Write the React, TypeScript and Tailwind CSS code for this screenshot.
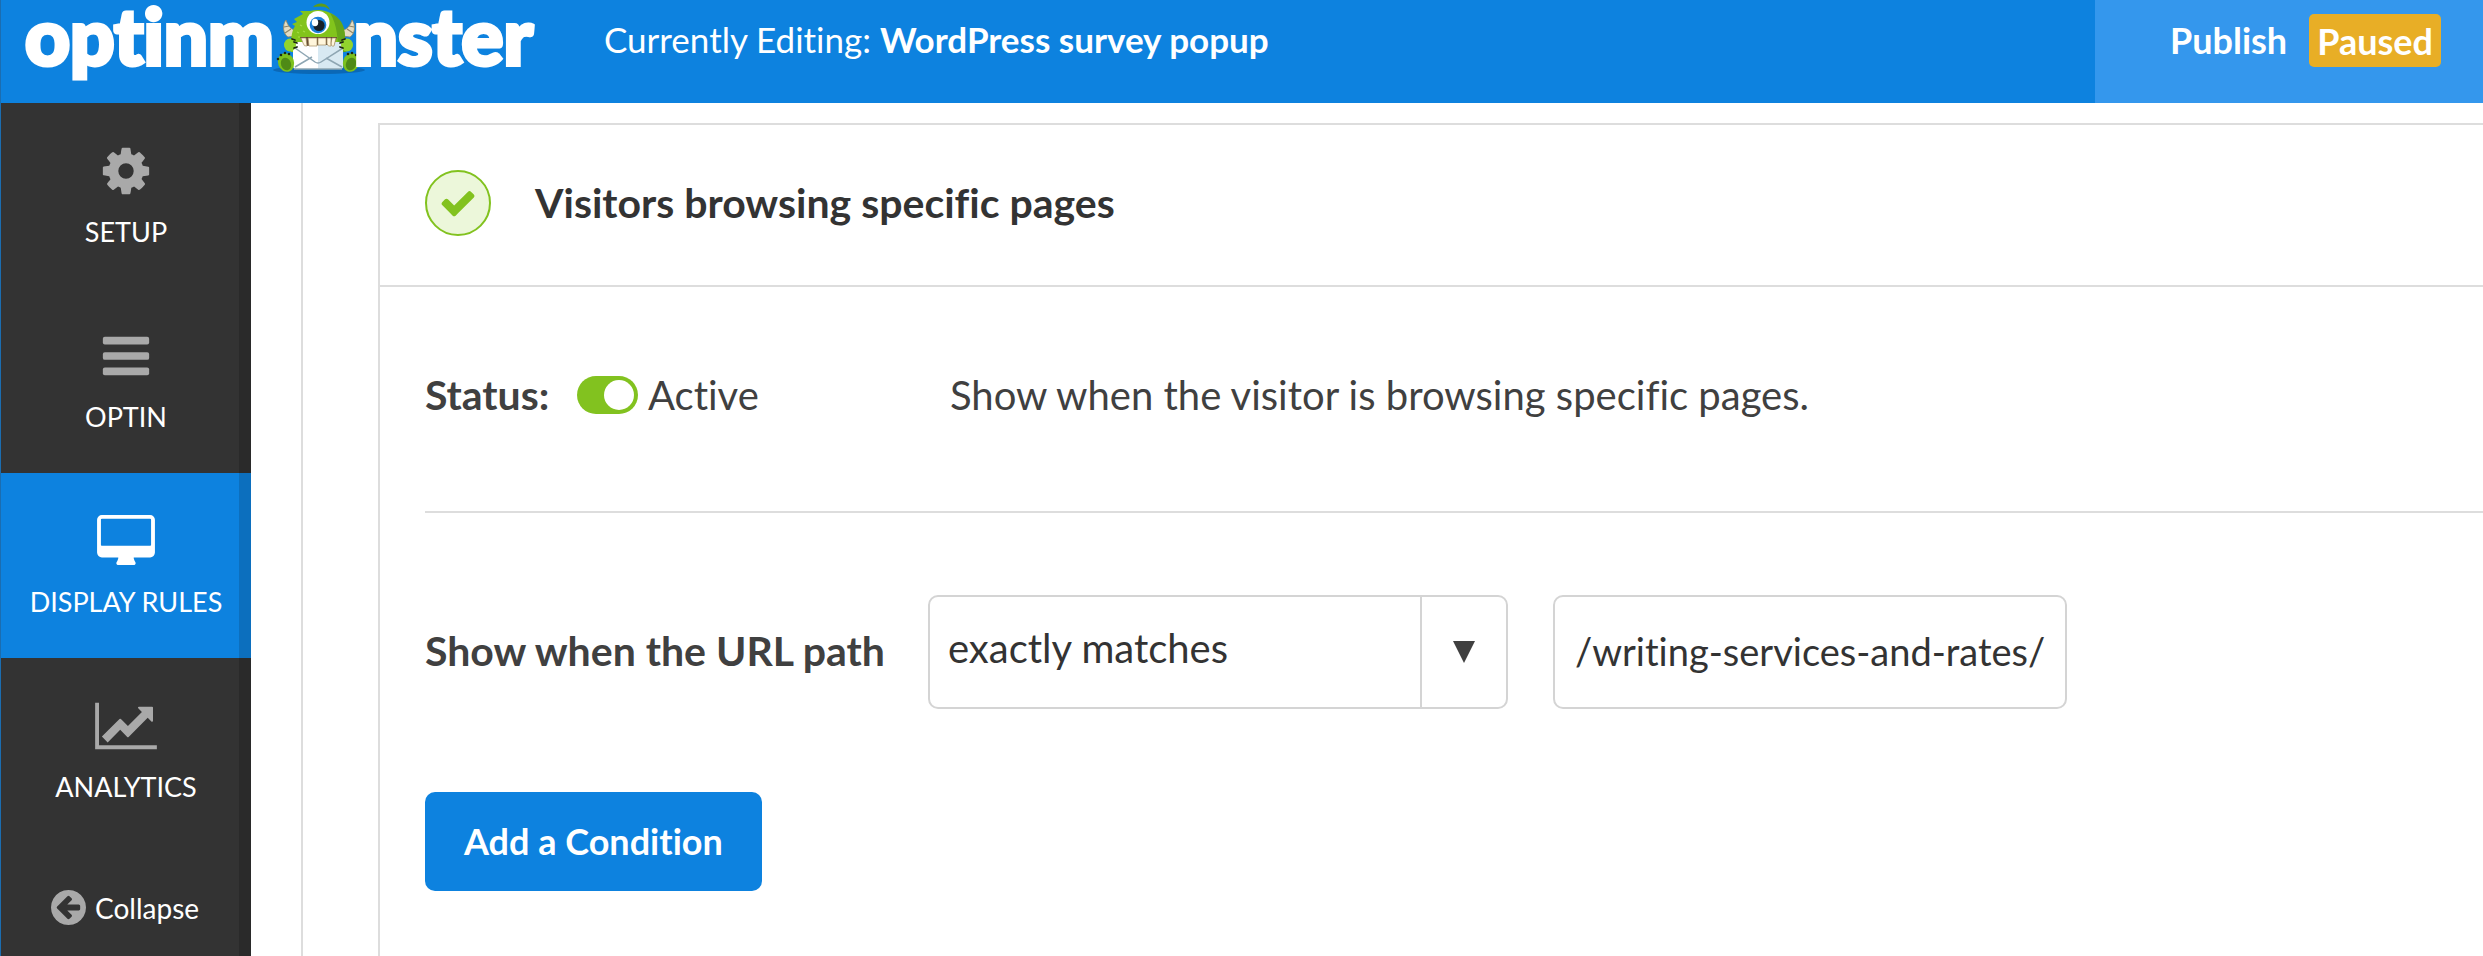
import React, { useState } from "react";

type IconProps = { className?: string };

function GearIcon({ className }: IconProps) {
  return (
    <svg className={className} viewBox="0 0 1792 1792" fill="currentColor" aria-hidden="true">
      <path d="M1152 896q0-106-75-181t-181-75-181 75-75 181 75 181 181 75 181-75 75-181zm512-109v222q0 12-8 23t-20 13l-185 28q-19 54-39 91 35 50 107 138 10 12 10 25t-9 23q-27 37-99 108t-94 71q-12 0-26-9l-138-108q-44 23-91 38-16 136-29 186-7 28-36 28h-222q-14 0-24.5-8.5t-11.5-21.5l-28-184q-49-16-90-37l-141 107q-10 9-25 9-14 0-25-11-126-114-165-168-7-10-7-23 0-12 8-23 15-21 51-66.5t54-70.5q-27-50-41-99l-183-27q-13-2-21-12.5t-8-23.5v-222q0-12 8-23t19-13l186-28q14-46 39-92-40-57-107-138-10-12-10-24 0-10 9-23 26-36 98.5-107.5t94.5-71.5q13 0 26 10l138 107q44-23 91-38 16-136 29-186 7-28 36-28h222q14 0 24.5 8.5t11.5 21.5l28 184q49 16 90 37l142-107q9-9 24-9 13 0 25 10 129 119 165 170 7 8 7 22 0 12-8 23-15 21-51 66.5t-54 70.5q26 50 41 98l183 28q13 2 21 12.5t8 23.5z" />
    </svg>
  );
}

function BarsIcon({ className }: IconProps) {
  return (
    <svg className={className} viewBox="0 0 1792 1792" fill="currentColor" aria-hidden="true">
      <rect x="128" y="256" width="1536" height="256" rx="64" />
      <rect x="128" y="768" width="1536" height="256" rx="64" />
      <rect x="128" y="1280" width="1536" height="256" rx="64" />
    </svg>
  );
}

function DesktopIcon({ className }: IconProps) {
  return (
    <svg className={className} viewBox="0 -32 1920 1792" fill="currentColor" aria-hidden="true">
      <path d="M1792 992v-832q0-13-9.5-22.5t-22.5-9.5h-1600q-13 0-22.5 9.5t-9.5 22.5v832q0 13 9.5 22.5t22.5 9.5h1600q13 0 22.5-9.5t9.5-22.5zm128-832v1088q0 66-47 113t-113 47h-544q0 37 16 77.5t32 71 16 43.5q0 26-19 45t-45 19h-512q-26 0-45-19t-19-45q0-14 16-44t32-70 16-78h-544q-66 0-113-47t-47-113v-1088q0-66 47-113t113-47h1600q66 0 113 47t47 113z" />
    </svg>
  );
}

function ChartIcon({ className }: IconProps) {
  return (
    <svg className={className} viewBox="0 0 2048 1792" fill="currentColor" aria-hidden="true">
      <path d="M2048 1536v128h-2048v-1536h128v1408h1920zm-128-1248v435q0 21-19.5 29.5t-35.5-7.5l-121-121-633 633q-10 10-23 10t-23-10l-233-233-416 416-192-192 585-585q10-10 23-10t23 10l233 233 464-464-121-121q-16-16-7.5-35.5t29.5-19.5h435q14 0 23 9t9 23z" />
    </svg>
  );
}

function ArrowCircleLeftIcon({ className }: IconProps) {
  return (
    <svg className={className} viewBox="128 128 1536 1536" fill="currentColor" aria-hidden="true">
      <path d="M1408 960v-128q0-26-19-45t-45-19h-502l189-189q19-19 19-45t-19-45l-91-91q-18-18-45-18t-45 18l-362 362-91 91q-18 18-18 45t18 45l91 91 362 362q18 18 45 18t45-18l91-91q18-18 18-45t-18-45l-189-189h502q26 0 45-19t19-45zm256-64q0 209-103 385.5t-279.5 279.5-385.5 103-385.5-103-279.5-279.5-103-385.5 103-385.5 279.5-279.5 385.5-103 385.5 103 279.5 279.5 103 385.5z" />
    </svg>
  );
}

function CheckIcon({ className }: IconProps) {
  return (
    <svg className={className} viewBox="0 0 1792 1792" fill="currentColor" aria-hidden="true">
      <path d="M1671 566q0 40-28 68l-724 724-136 136q-28 28-68 28t-68-28l-136-136-362-362q-28-28-28-68t28-68l136-136q28-28 68-28t68 28l294 295 656-657q28-28 68-28t68 28l136 136q28 28 28 68z" />
    </svg>
  );
}

function MonsterIcon({ className }: IconProps) {
  return (
    <svg className={className} viewBox="3 0 94 80" aria-hidden="true">
      <ellipse cx="50" cy="70" rx="46" ry="4" fill="#0b68b6" />
      <path d="M44 7c4-5 14-5 17 3c-4-4-9-4-17-3z" fill="#5f9c1c" />
      {/* horns */}
      <path d="M17 20c-4 5-3 14 2 17l7-1l1-6c-5 0-8-4-10-10z" fill="#e4dcc2" stroke="#8f8668" strokeWidth="0.8" />
      <path d="M83 20c4 5 3 14-2 17l-7-1l-1-6c5 0 8-4 10-10z" fill="#e4dcc2" stroke="#8f8668" strokeWidth="0.8" />
      <path d="M15 27l5-1M16 33l6-4M85 27l-5-1M84 33l-6-4" stroke="#8f8668" strokeWidth="1.2" />
      {/* head */}
      <path d="M22 52c0-12 0-20 4-26l-3-2l5-2l-3-3l9-5l-3-3l10 0c16-4 34 5 35 26l1 15z" fill="#82c41c" />
      <path d="M61 13c10 4 15 12 15 24l1 15h-9c2-10 0-28-7-39z" fill="#65a51a" />
      <path d="M28 32l2 1M31 25l2 1M34 31l2 1M29 37l2 0" stroke="#a5dc45" strokeWidth="1.2" />
      <ellipse cx="49" cy="22.5" rx="11.5" ry="11.5" fill="#fff" />
      <circle cx="49" cy="25" r="8.3" fill="#1c80da" />
      <circle cx="50" cy="25.5" r="5.6" fill="#182029" />
      <ellipse cx="46" cy="22.5" rx="3.2" ry="3.8" fill="#fff" />
      {/* envelope */}
      <path d="M24 42h50v24q0 3-3 3h-44q-3 0-3-3z" fill="#fff" />
      <path d="M49 42h25v24q0 3-3 3h-22z" fill="#d8e9f2" />
      <path d="M26 48l20 14q3 2 6 0l22-14M26 67l17-10M73 67l-16-9M25 69h48" fill="none" stroke="#8ea6b3" strokeWidth="1.5" />
      {/* teeth */}
      <path d="M31 37h37l-3 8l-14 0l-14 1z" fill="#5f4630" />
      <path d="M32 38l5 0l1 8q-3 1-4-3zM39 38h9v8h-8zM49 38h8v7h-8zM58 38h4v8q-3 1-4-2zM63 38h4l-2 8q-3 1-3-3z" fill="#fff6dc" stroke="#a38c62" strokeWidth="0.7" />
      {/* hands */}
      <ellipse cx="21" cy="45" rx="6" ry="6.5" fill="#92d42d" />
      <ellipse cx="78" cy="45" rx="6" ry="6.5" fill="#92d42d" />
      <path d="M23 39l3 1M25 42l3 1M25 48l3-1M76 39l-3 1M74 42l-3 1M74 48l-3-1" stroke="#1d2a12" strokeWidth="1.8" strokeLinecap="round" />
      {/* feet */}
      <ellipse cx="17" cy="62.5" rx="8" ry="9.5" transform="rotate(-20 17 62.5)" fill="#7cc11e" />
      <ellipse cx="82" cy="62.5" rx="8" ry="9.5" transform="rotate(20 82 62.5)" fill="#7cc11e" />
      <ellipse cx="17" cy="64" rx="5" ry="6.5" transform="rotate(-20 17 64)" fill="#4f8a16" />
      <ellipse cx="82" cy="64" rx="5" ry="6.5" transform="rotate(20 82 64)" fill="#4f8a16" />
      <path d="M9 59l0 0M12 55l0 0M16 53l0 0M20 54l0 0M90 59l0 0M87 55l0 0M83 53l0 0M79 54l0 0" stroke="#1d2a12" strokeWidth="2.6" strokeLinecap="round" />
    </svg>
  );
}

type NavItem = {
  label: string;
  icon: React.ReactNode;
  active?: boolean;
};

const navItems: NavItem[] = [
  { label: "SETUP", icon: <GearIcon className="h-[54px] w-[54px]" /> },
  { label: "OPTIN", icon: <BarsIcon className="h-[54px] w-[54px]" /> },
  { label: "DISPLAY RULES", icon: <DesktopIcon className="h-[54px] w-[58px]" />, active: true },
  { label: "ANALYTICS", icon: <ChartIcon className="h-[54px] w-[62px]" /> },
];

function Header() {
  return (
    <header className="flex h-[103px] shrink-0 items-start bg-[#0d82df] text-white">
      <a
        href="#home"
        className="flex h-[80px] w-[603px] shrink-0 items-start pl-[24px] text-[78px] leading-[70px] font-black [-webkit-text-stroke:4px_white]"
      >
        <span>optinm</span>
        <MonsterIcon className="-mr-[12px] -ml-[2px] h-[80px] w-[94px] shrink-0 [-webkit-text-stroke:0]" />
        <span>nster</span>
      </a>
      <p className="flex-1 text-[35px] leading-[79px] whitespace-nowrap">
        Currently Editing: <strong className="font-bold">WordPress survey popup</strong>
      </p>
      <div className="flex h-full w-[388px] shrink-0 items-start gap-[22px] bg-[#3497ed] pt-[14px] pl-[75px] text-[36px] leading-[52px] font-bold">
        <span>Publish</span>
        <button type="button" className="h-[53px] rounded-[5px] bg-[#e8ae26] px-[8px]">
          Paused
        </button>
      </div>
    </header>
  );
}

function Sidebar() {
  return (
    <nav className="flex w-[250px] shrink-0 flex-col border-r-[12px] border-[#2a2a2a] bg-[#333] text-[27px] leading-[32px] text-white">
      {navItems.map((item) => (
        <a
          key={item.label}
          href="#section"
          aria-current={item.active ? "page" : undefined}
          className={
            item.active
              ? "-mr-[12px] flex h-[185px] flex-col items-center gap-[18px] border-r-[12px] border-[#0c6fbe] bg-[#0d82df] pt-[41px] pl-[12px] whitespace-nowrap"
              : "flex h-[185px] flex-col items-center gap-[18px] pt-[41px] pl-[12px] whitespace-nowrap"
          }
        >
          <span className={item.active ? "text-white" : "text-[#a9a9a9]"}>{item.icon}</span>
          {item.label}
        </a>
      ))}
      <button type="button" className="flex items-center gap-[9px] pt-[47px] pl-[50px] text-[28px]">
        <ArrowCircleLeftIcon className="h-[35px] w-[35px] text-[#a9a9a9]" />
        Collapse
      </button>
    </nav>
  );
}

function StatusToggle() {
  const [active, setActive] = useState(true);
  return (
    <label className="flex items-center gap-[10px]">
      <span className="grid h-[38px] w-[61px] items-center">
        <input
          type="checkbox"
          checked={active}
          onChange={(event) => setActive(event.target.checked)}
          className="peer col-start-1 row-start-1 h-full w-full appearance-none rounded-full bg-[#aaa] checked:bg-[#82c21f]"
        />
        <span className="pointer-events-none col-start-1 row-start-1 ml-[4px] h-[30px] w-[30px] rounded-full bg-white peer-checked:ml-[27px]" />
      </span>
      Active
    </label>
  );
}

export default function App() {
  const [path, setPath] = useState("/writing-services-and-rates/");
  return (
    <div className="flex min-h-screen flex-col overflow-hidden border-l border-[#1b6db0] bg-white font-['Lato',sans-serif] text-[#404040] [font-variant-ligatures:none]">
      <Header />
      <div className="flex flex-1">
        <Sidebar />
        <main className="ml-[50px] flex flex-1 flex-col border-l-2 border-[#ddd] pt-[20px] pl-[75px]">
          <section className="flex-1 border-t-2 border-l-2 border-[#ddd] text-[40px] leading-[48px]">
            <div className="flex h-[162px] items-center gap-[44px] border-b-2 border-[#ddd] pb-[4px] pl-[45px]">
              <span className="flex h-[66px] w-[66px] items-center justify-center rounded-full border-2 border-[#82c21f] bg-[#ecf7da] text-[#82c21f]">
                <CheckIcon className="h-[38px] w-[38px]" />
              </span>
              <h1 className="text-[41px] font-bold text-[#333]">Visitors browsing specific pages</h1>
            </div>
            <div className="pl-[45px]">
              <div className="flex h-[226px] items-center border-b-2 border-[#ddd] pb-[8px]">
                <strong className="w-[152px] text-[41px] font-bold">Status:</strong>
                <div className="w-[373px]">
                  <StatusToggle />
                </div>
                <p>Show when the visitor is browsing specific pages.</p>
              </div>
              <div className="flex items-center pt-[82px]">
                <label htmlFor="operator" className="w-[503px] pb-[2px] text-[41px] font-bold">
                  Show when the URL path
                </label>
                <div className="grid h-[114px] w-[580px] rounded-[10px] border-2 border-[#d4d4d4]">
                  <select
                    id="operator"
                    className="col-start-1 row-start-1 appearance-none bg-transparent pr-[90px] pb-[8px] pl-[18px] text-[#333] outline-none"
                  >
                    <option>exactly matches</option>
                  </select>
                  <span className="pointer-events-none col-start-1 row-start-1 flex w-[86px] items-center justify-center justify-self-end border-l-2 border-[#d4d4d4]">
                    <svg className="h-[22px] w-[22px]" viewBox="0 0 22 22" fill="#404040" aria-hidden="true">
                      <path d="M0 0h22L11 22z" />
                    </svg>
                  </span>
                </div>
                <input
                  type="text"
                  aria-label="URL path"
                  value={path}
                  onChange={(event) => setPath(event.target.value)}
                  className="ml-[45px] h-[114px] w-[514px] rounded-[10px] border-2 border-[#d4d4d4] px-[20px] pb-[2px] text-[38px] text-[#333] outline-none"
                />
              </div>
              <button
                type="button"
                className="mt-[83px] h-[99px] rounded-[10px] bg-[#0d82df] px-[39px] pb-[2px] text-[36px] font-bold text-white"
              >
                Add a Condition
              </button>
            </div>
          </section>
        </main>
      </div>
    </div>
  );
}
